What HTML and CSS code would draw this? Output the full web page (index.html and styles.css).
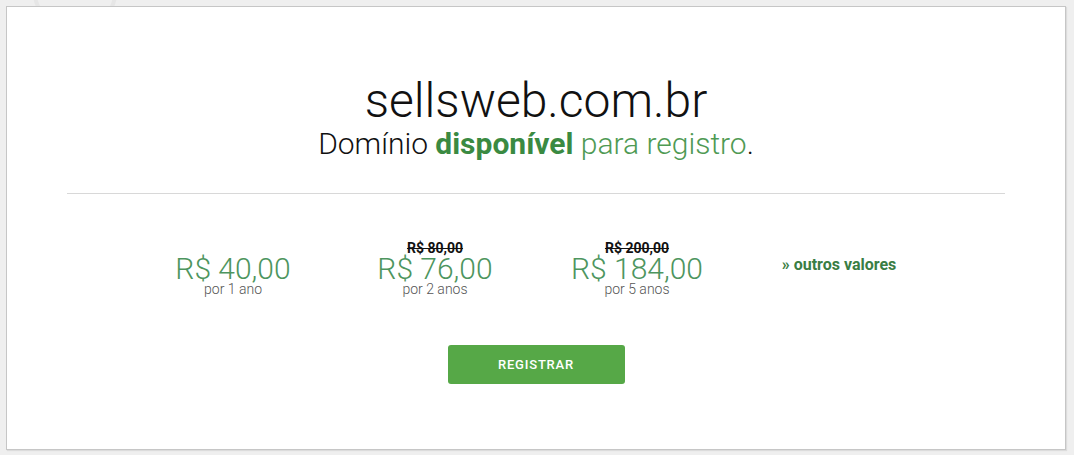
FILE: index.html
```html
<!DOCTYPE html>
<html lang="pt-BR">
<head>
<meta charset="utf-8">
<title>sellsweb.com.br</title>
<link rel="stylesheet" href="styles.css">
</head>
<body>
<div class="page">
  <div class="card">
    <h1 class="domain">sellsweb.com.br</h1>
    <p class="status">Domínio <strong>disponível</strong> <span class="light">para registro</span>.</p>
    <hr class="rule">
    <div class="prices">
      <div class="price">
        <span class="old"></span>
        <span class="value">R$ 40,00</span>
        <span class="period">por 1 ano</span>
      </div>
      <div class="price">
        <span class="old"><s>R$ 80,00</s></span>
        <span class="value">R$ 76,00</span>
        <span class="period">por 2 anos</span>
      </div>
      <div class="price">
        <span class="old"><s>R$ 200,00</s></span>
        <span class="value">R$ 184,00</span>
        <span class="period">por 5 anos</span>
      </div>
      <div class="price more">
        <a href="#" class="others">» outros valores</a>
      </div>
    </div>
    <div class="actions">
      <button class="btn">REGISTRAR</button>
    </div>
  </div>
</div>
</body>
</html>
```
FILE: styles.css
```css
html, body {
  margin: 0;
  padding: 0;
}
body {
  width: 1074px;
  height: 455px;
  overflow: hidden;
  background: #efefef;
  font-family: Roboto, "Liberation Sans", sans-serif;
}
.page {
  padding: 6px 8px 5px 6px;
  background:
    radial-gradient(circle at 75px -10px, transparent 38px, #e6e6e6 39px, #e6e6e6 42px, transparent 43px),
    #efefef;
}
.card {
  background: #fff;
  border: 1px solid #c6c6c6;
  box-shadow: 1px 1px 1px rgba(0,0,0,0.08);
  height: 444px;
  box-sizing: border-box;
  display: flex;
  flex-direction: column;
  align-items: center;
  padding-top: 67px;
}
.domain {
  margin: 0;
  font-weight: 300;
  font-size: 48px;
  line-height: 54px;
  color: #111;
}
.status {
  margin: -2px 0 0;
  font-weight: 300;
  font-size: 30px;
  line-height: 35px;
  color: #111;
}
.status strong {
  font-weight: 700;
  color: #3a8a42;
}
.status .light {
  color: #4f9a54;
}
.rule {
  align-self: stretch;
  margin: 32px 60px 0;
  border: 0;
  border-top: 1px solid #d8d8d8;
}
.prices {
  margin-top: 46px;
  display: grid;
  grid-template-columns: repeat(4, 202px);
}
.price {
  display: flex;
  flex-direction: column;
  align-items: center;
}
.old {
  height: 16px;
  font-size: 14px;
  line-height: 16px;
  font-weight: 700;
  color: #111;
}
.value {
  font-size: 30px;
  font-weight: 300;
  line-height: 26px;
  color: #4d955e;
}
.period {
  font-size: 14px;
  font-weight: 300;
  line-height: 14px;
  color: #555;
}
.more {
  justify-content: center;
  padding-bottom: 8px;
}
.others {
  font-size: 16px;
  font-weight: 700;
  color: #3a7d44;
  text-decoration: none;
}
.actions {
  margin-top: 49px;
}
.btn {
  width: 177px;
  height: 39px;
  border: 0;
  border-radius: 3px;
  background: #56a847;
  color: #fff;
  font-family: Roboto, "Liberation Sans", sans-serif;
  font-size: 13px;
  font-weight: 500;
  letter-spacing: 0.8px;
}
```
